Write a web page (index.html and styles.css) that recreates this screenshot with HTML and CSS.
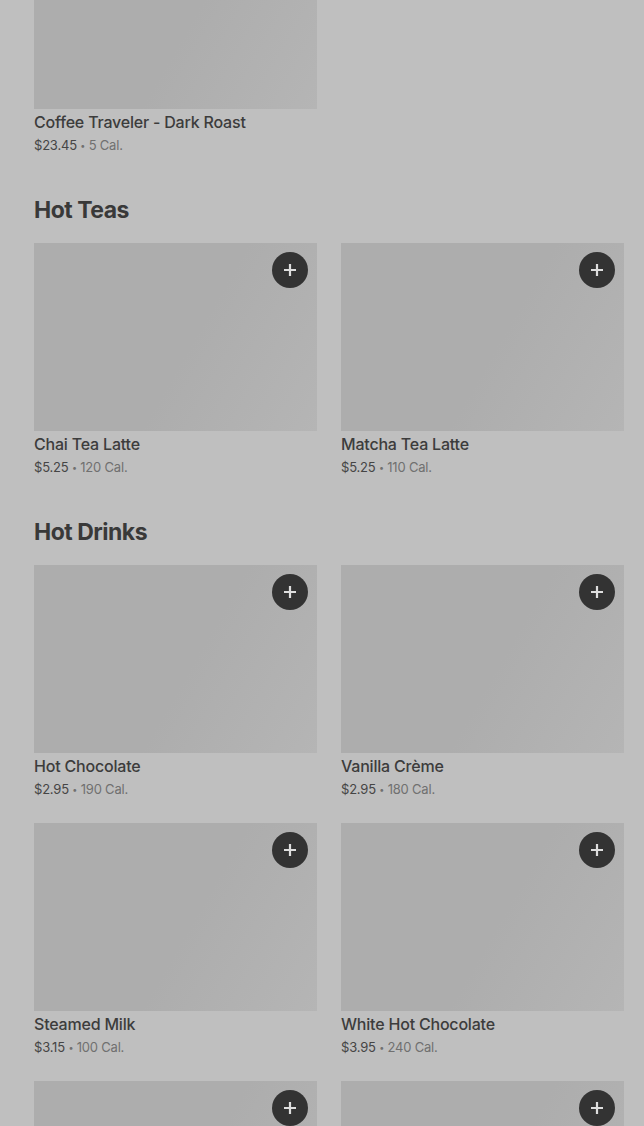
FILE: index.html
```html
<!DOCTYPE html>
<html lang="en">

<head>
    <meta charset="UTF-8">
    <meta name="viewport" content="width=device-width, initial-scale=1.0">
    <title>Menu</title>
    <link rel="stylesheet" href="styles.css">
</head>

<body>
    <main class="menu">
        <section class="section">
            <div class="grid">
                <div class="card">
                    <div class="card_img"></div>
                    <div class="card_title">Coffee Traveler - Dark Roast</div>
                    <div class="card_meta"><span class="price">$23.45</span> <span class="dot">•</span> 5 Cal.</div>
                </div>
            </div>
        </section>

        <section class="section">
            <h2>Hot Teas</h2>
            <div class="grid">
                <div class="card">
                    <div class="card_img">
                        <button class="add"><svg width="12" height="12" viewBox="0 0 12 12"><path d="M6 0v12M0 6h12" stroke="currentColor" stroke-width="2.2"/></svg></button>
                    </div>
                    <div class="card_title">Chai Tea Latte</div>
                    <div class="card_meta"><span class="price">$5.25</span> <span class="dot">•</span> 120 Cal.</div>
                </div>
                <div class="card">
                    <div class="card_img">
                        <button class="add"><svg width="12" height="12" viewBox="0 0 12 12"><path d="M6 0v12M0 6h12" stroke="currentColor" stroke-width="2.2"/></svg></button>
                    </div>
                    <div class="card_title">Matcha Tea Latte</div>
                    <div class="card_meta"><span class="price">$5.25</span> <span class="dot">•</span> 110 Cal.</div>
                </div>
            </div>
        </section>

        <section class="section">
            <h2>Hot Drinks</h2>
            <div class="grid">
                <div class="card">
                    <div class="card_img">
                        <button class="add"><svg width="12" height="12" viewBox="0 0 12 12"><path d="M6 0v12M0 6h12" stroke="currentColor" stroke-width="2.2"/></svg></button>
                    </div>
                    <div class="card_title">Hot Chocolate</div>
                    <div class="card_meta"><span class="price">$2.95</span> <span class="dot">•</span> 190 Cal.</div>
                </div>
                <div class="card">
                    <div class="card_img">
                        <button class="add"><svg width="12" height="12" viewBox="0 0 12 12"><path d="M6 0v12M0 6h12" stroke="currentColor" stroke-width="2.2"/></svg></button>
                    </div>
                    <div class="card_title">Vanilla Crème</div>
                    <div class="card_meta"><span class="price">$2.95</span> <span class="dot">•</span> 180 Cal.</div>
                </div>
                <div class="card">
                    <div class="card_img">
                        <button class="add"><svg width="12" height="12" viewBox="0 0 12 12"><path d="M6 0v12M0 6h12" stroke="currentColor" stroke-width="2.2"/></svg></button>
                    </div>
                    <div class="card_title">Steamed Milk</div>
                    <div class="card_meta"><span class="price">$3.15</span> <span class="dot">•</span> 100 Cal.</div>
                </div>
                <div class="card">
                    <div class="card_img">
                        <button class="add"><svg width="12" height="12" viewBox="0 0 12 12"><path d="M6 0v12M0 6h12" stroke="currentColor" stroke-width="2.2"/></svg></button>
                    </div>
                    <div class="card_title">White Hot Chocolate</div>
                    <div class="card_meta"><span class="price">$3.95</span> <span class="dot">•</span> 240 Cal.</div>
                </div>
                <div class="card">
                    <div class="card_img">
                        <button class="add"><svg width="12" height="12" viewBox="0 0 12 12"><path d="M6 0v12M0 6h12" stroke="currentColor" stroke-width="2.2"/></svg></button>
                    </div>
                </div>
                <div class="card">
                    <div class="card_img">
                        <button class="add"><svg width="12" height="12" viewBox="0 0 12 12"><path d="M6 0v12M0 6h12" stroke="currentColor" stroke-width="2.2"/></svg></button>
                    </div>
                </div>
            </div>
        </section>
    </main>
</body>
</html>
```

FILE: styles.css
```css
* {
    box-sizing: border-box;
}

body,
html {
    padding: 0;
    margin: 0;
    font-family: Inter, "Noto Sans", sans-serif;
    background-color: #bfbfbf;
    overflow: hidden;
}

body {
    height: 1126px;
}

.menu {
    margin-top: -79px;
    padding: 0 20px 0 34px;
}

.section h2 {
    margin: 39px 0 17px;
    font-size: 23px;
    line-height: 32px;
    font-weight: 700;
    letter-spacing: -0.5px;
    color: #393939;
}

.grid {
    display: grid;
    grid-template-columns: 283px 283px;
    column-gap: 24px;
    row-gap: 24px;
}

.card_img {
    position: relative;
    height: 188px;
    background-image: linear-gradient(120deg, #adadad 0%, #adadad 55%, #b5b5b5 100%);
}

.add {
    position: absolute;
    top: 9px;
    right: 9px;
    width: 36px;
    height: 36px;
    padding: 0;
    border: none;
    border-radius: 50%;
    background-color: #333333;
    color: #dedede;
    display: flex;
    align-items: center;
    justify-content: center;
}

.card_title {
    margin-top: 2px;
    height: 22px;
    font-size: 16px;
    line-height: 22px;
    font-weight: 500;
    letter-spacing: -0.2px;
    color: #3c3c3c;
}

.card_meta {
    margin-top: 2px;
    height: 20px;
    font-size: 13px;
    line-height: 20px;
    letter-spacing: -0.2px;
    color: #707070;
}

.price {
    color: #454545;
}

.dot {
    font-size: 9px;
    line-height: 0;
    vertical-align: 1px;
}
```
